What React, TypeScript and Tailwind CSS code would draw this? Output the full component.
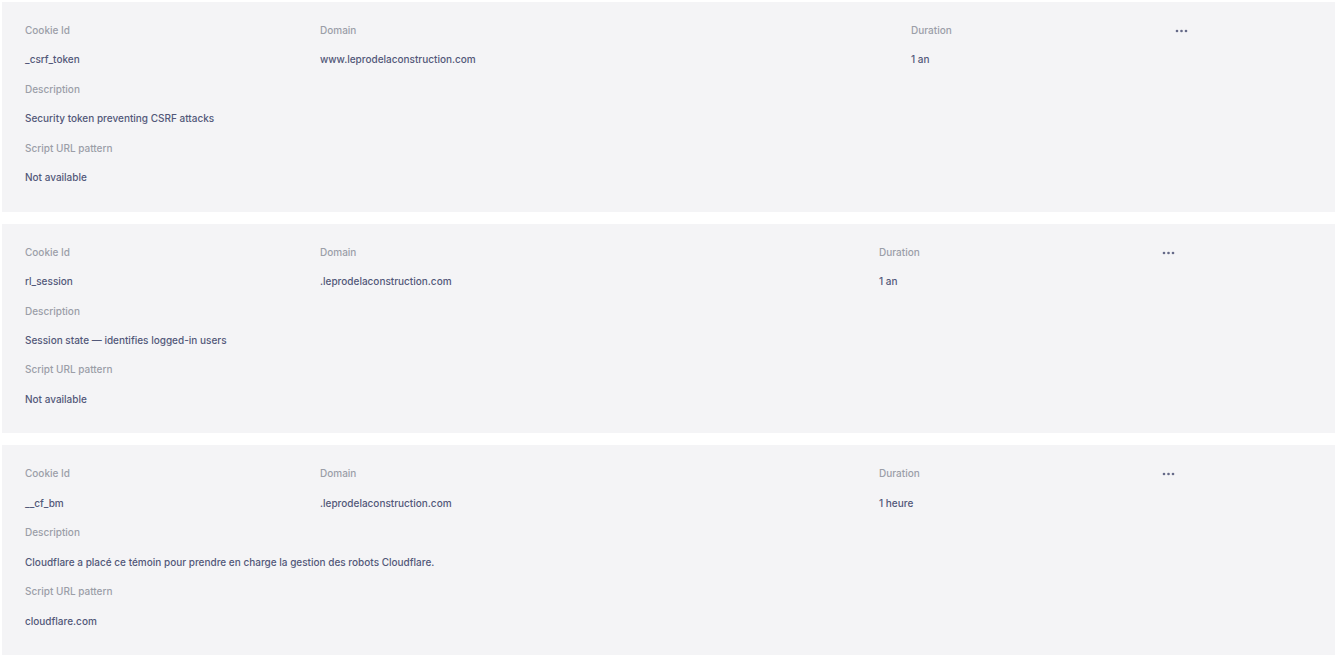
import type { ReactNode } from 'react'

type Cookie = {
  id: string
  domain: string
  duration: string
  description: string
  scriptUrl: string
  /** Column widths of the top row; they follow the content in the original table. */
  cols: string
}

const COOKIES: Cookie[] = [
  {
    id: '_csrf_token',
    domain: 'www.leprodelaconstruction.com',
    duration: '1 an',
    description: 'Security token preventing CSRF attacks',
    scriptUrl: 'Not available',
    cols: 'grid-cols-[295px_591px_264px_1fr]',
  },
  {
    id: 'rl_session',
    domain: '.leprodelaconstruction.com',
    duration: '1 an',
    description: 'Session state — identifies logged-in users',
    scriptUrl: 'Not available',
    cols: 'grid-cols-[295px_559px_283px_1fr]',
  },
  {
    id: '__cf_bm',
    domain: '.leprodelaconstruction.com',
    duration: '1 heure',
    description: 'Cloudflare a placé ce témoin pour prendre en charge la gestion des robots Cloudflare.',
    scriptUrl: 'cloudflare.com',
    cols: 'grid-cols-[295px_559px_283px_1fr]',
  },
]

const Label = ({ children }: { children: ReactNode }) => (
  <div className="text-[10px] leading-[29.4px] font-medium text-[#9b9ea8]">{children}</div>
)

const Value = ({ children }: { children: ReactNode }) => (
  <div className="text-[10px] leading-[29.4px] font-medium text-[#525879]">{children}</div>
)

const Dots = () => (
  <svg width="13" height="4" viewBox="0 0 13 4" className="mt-[13px] fill-[#656a88]">
    <circle cx="2" cy="2" r="1.3" />
    <circle cx="6.5" cy="2" r="1.3" />
    <circle cx="11" cy="2" r="1.3" />
  </svg>
)

const CookieCard = ({ cookie }: { cookie: Cookie }) => (
  <div className="bg-[#f4f4f6] pt-[14px] pb-[19.3px] pl-[23px]">
    <div className={`grid ${cookie.cols}`}>
      <Label>Cookie Id</Label>
      <Label>Domain</Label>
      <Label>Duration</Label>
      <div className="row-span-2">
        <Dots />
      </div>
      <Value>{cookie.id}</Value>
      <Value>{cookie.domain}</Value>
      <Value>{cookie.duration}</Value>
    </div>
    <Label>Description</Label>
    <Value>{cookie.description}</Value>
    <Label>Script URL pattern</Label>
    <Value>{cookie.scriptUrl}</Value>
  </div>
)

export default function App() {
  return (
    <div className="min-h-screen bg-white pt-[2px] pr-[3px] pl-[2px] font-['Inter','Noto_Sans',sans-serif]">
      <div className="flex flex-col gap-3">
        {COOKIES.map((c) => (
          <CookieCard key={c.id} cookie={c} />
        ))}
      </div>
    </div>
  )
}
